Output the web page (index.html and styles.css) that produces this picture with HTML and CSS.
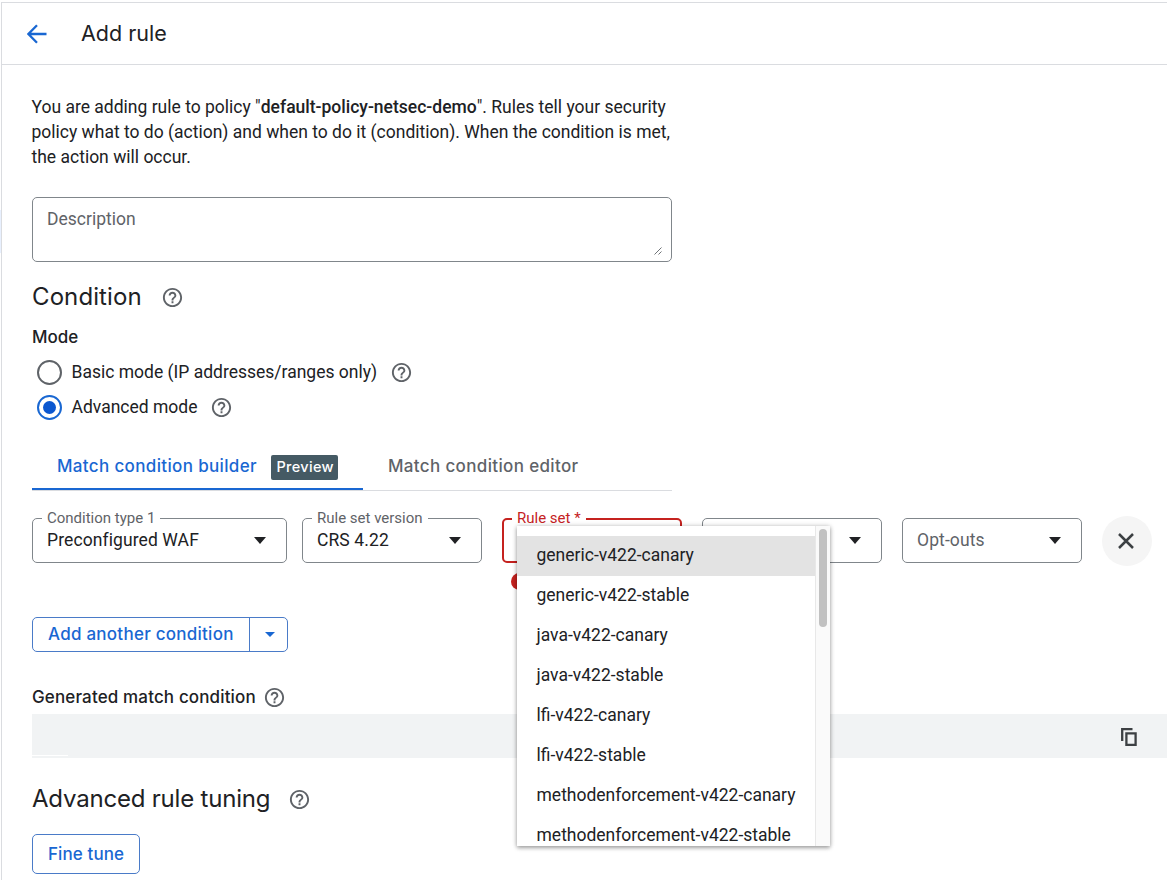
FILE: index.html
```html
<!DOCTYPE html>
<html lang="en">
<head>
    <meta charset="UTF-8">
    <meta name="viewport" content="width=device-width, initial-scale=1.0">
    <title>Add rule</title>
    <link rel="stylesheet" href="styles.css">
</head>
<body>
    <svg width="0" height="0" class="sprite">
        <symbol id="help" viewBox="0 0 24 24">
            <path d="M11 18h2v-2h-2v2zm1-16C6.48 2 2 6.48 2 12s4.48 10 10 10 10-4.48 10-10S17.52 2 12 2zm0 18c-4.41 0-8-3.59-8-8s3.59-8 8-8 8 3.59 8 8-3.59 8-8 8zm0-14c-2.21 0-4 1.79-4 4h2c0-1.1.9-2 2-2s2 .9 2 2c0 2-3 1.75-3 5h2c0-2.25 3-2.5 3-5 0-2.21-1.79-4-4-4z"/>
        </symbol>
    </svg>

    <div class="page">
        <header class="header">
            <svg class="back" viewBox="0 0 20 20"><path d="M19.5 10H1.6M10 1.2L1.4 10l8.6 8.8"/></svg>
            <h1 class="title">Add rule</h1>
        </header>

        <main class="content">
            <p class="intro">You are adding rule to policy "<b>default-policy-netsec-demo</b>". Rules tell your security<br>policy what to do (action) and when to do it (condition). When the condition is met,<br>the action will occur.</p>

            <div class="description">
                <span>Description</span>
                <svg class="grip" viewBox="0 0 8 8"><path d="M0.5 7.5l7-7M4.5 7.5l3-3"/></svg>
            </div>

            <h2 class="heading"><span>Condition</span><svg class="help"><use href="#help"/></svg></h2>

            <div class="mode-label">Mode</div>
            <div class="radio-row">
                <span class="radio"></span>
                <span class="radio-text">Basic mode (IP addresses/ranges only)</span>
                <svg class="help"><use href="#help"/></svg>
            </div>
            <div class="radio-row">
                <span class="radio checked"></span>
                <span class="radio-text">Advanced mode</span>
                <svg class="help"><use href="#help"/></svg>
            </div>

            <div class="tabs">
                <div class="tab active"><span>Match condition builder</span><span class="badge">Preview</span></div>
                <div class="tab"><span>Match condition editor</span></div>
            </div>

            <div class="fields">
                <div class="field wide">
                    <span class="label">Condition type 1</span>
                    <span class="value">Preconfigured WAF</span>
                    <span class="caret"></span>
                </div>
                <div class="field">
                    <span class="label">Rule set version</span>
                    <span class="value">CRS 4.22</span>
                    <span class="caret"></span>
                </div>
                <div class="rule-set">
                    <div class="field error">
                        <span class="label">Rule set *</span>
                    </div>
                    <span class="error-icon"></span>
                    <div class="menu">
                        <ul class="options">
                            <li class="selected">generic-v422-canary</li>
                            <li>generic-v422-stable</li>
                            <li>java-v422-canary</li>
                            <li>java-v422-stable</li>
                            <li>lfi-v422-canary</li>
                            <li>lfi-v422-stable</li>
                            <li>methodenforcement-v422-canary</li>
                            <li>methodenforcement-v422-stable</li>
                        </ul>
                        <div class="scrollbar"><div class="thumb"></div></div>
                    </div>
                </div>
                <div class="field">
                    <span class="value"></span>
                    <span class="caret"></span>
                </div>
                <div class="field">
                    <span class="value placeholder">Opt-outs</span>
                    <span class="caret"></span>
                </div>
                <div class="remove">
                    <svg viewBox="0 0 16 16"><path d="M1 1l14 14M15 1L1 15"/></svg>
                </div>
            </div>

            <div class="split-button">
                <span class="split-main">Add another condition</span>
                <span class="split-arrow"><span class="caret small"></span></span>
            </div>

            <div class="generated"><span>Generated match condition</span><svg class="help"><use href="#help"/></svg></div>
            <div class="code-bar">
                <span class="scroll-hint"></span>
                <svg class="copy" viewBox="0 0 16 19"><path d="M1.2 13V1.2h10.3M5.4 5.4h9.2v11.4H5.4z"/></svg>
            </div>

            <h2 class="heading tuning"><span>Advanced rule tuning</span><svg class="help"><use href="#help"/></svg></h2>
            <div class="fine-tune">Fine tune</div>
        </main>
    </div>
</body>
</html>
```

FILE: styles.css
```css
* {
    box-sizing: border-box;
}

body {
    margin: 0;
    /* selected item of the side nav, just visible at the left edge */
    background: linear-gradient(#e8f0fe, #e8f0fe) 0 210px / 1px 43px no-repeat #ffffff;
    color: #202124;
    font-family: Roboto, Arial, sans-serif;
    font-size: 17.5px;
    height: 880px;
    overflow: hidden;
}

.sprite {
    position: absolute;
}

.page {
    margin: 2px 0 0 1px;
    height: 878px;
    border-top: 1px solid #dadce0;
    border-left: 1px solid #dadce0;
}

.header {
    display: flex;
    align-items: center;
    height: 62px;
    padding-left: 25px;
    border-bottom: 1px solid #dadce0;
}

.back {
    width: 20px;
    height: 20px;
    margin-right: 34px;
    fill: none;
    stroke: #1967d2;
    stroke-width: 2.3;
}

.title,
.heading,
.mode-label,
.tab,
.split-button,
.generated,
.fine-tune {
    font-family: Inter, Arial, sans-serif;
}

.title {
    margin: 0;
    padding-bottom: 2px;
    font-size: 21.5px;
    font-weight: 400;
}

.content {
    padding: 30px 0 0 30px;
}

.intro {
    margin: 0 0 0 -0.5px;
    line-height: 25px;
    white-space: nowrap;
}

.intro b {
    font-weight: 500;
}

.description {
    display: flex;
    justify-content: space-between;
    width: 640px;
    height: 65px;
    margin-top: 27px;
    padding: 11px 9px 6px 14px;
    border: 1px solid #80868b;
    border-radius: 5px;
    color: #5f6368;
}

.grip {
    align-self: flex-end;
    width: 8px;
    height: 8px;
    fill: none;
    stroke: #5f6368;
    stroke-width: 0.9;
}

.heading {
    display: flex;
    align-items: center;
    gap: 19px;
    height: 30px;
    margin: 20px 0 0;
    font-size: 24px;
    font-weight: 400;
    letter-spacing: 0.1px;
}

.heading span {
    padding-bottom: 2px;
}

.help {
    flex: none;
    width: 23px;
    height: 23px;
    fill: #5f6368;
}

.mode-label {
    height: 30px;
    margin-top: 10px;
    font-size: 17px;
    font-weight: 500;
    line-height: 30px;
}

.radio-row {
    display: flex;
    align-items: center;
    height: 35px;
    padding-left: 5px;
}

.mode-label + .radio-row {
    margin-top: 3px;
}

.radio {
    display: flex;
    align-items: center;
    justify-content: center;
    width: 25px;
    height: 25px;
    margin-right: 9.5px;
    border: 2px solid #5f6368;
    border-radius: 50%;
}

.radio-text {
    padding-bottom: 2px;
}

.radio.checked {
    border-color: #1967d2;
}

.radio.checked::after {
    content: "";
    width: 13px;
    height: 13px;
    border-radius: 50%;
    background-color: #0b57d0;
}

.radio-row .help {
    margin-left: 13px;
}

.tabs {
    display: flex;
    width: 640px;
    height: 48px;
    margin-top: 18px;
    border-bottom: 1px solid #dadce0;
}

.tab {
    display: flex;
    align-items: center;
    height: 47px;
    padding: 0 25px 2px;
    color: #5f6368;
    font-size: 17px;
    font-weight: 500;
    letter-spacing: 0.35px;
    white-space: nowrap;
}

.tab.active {
    width: 331px;
    padding-bottom: 0;
    border-bottom: 2px solid #1967d2;
    color: #1967d2;
}

.badge {
    height: 25px;
    margin: 3px 0 0 auto;
    padding: 0 4px 0 5px;
    border-radius: 2px;
    background-color: #455a64;
    color: #ffffff;
    font-size: 14.5px;
    line-height: 24px;
}

.fields {
    display: flex;
    align-items: flex-start;
    gap: 20px;
    height: 99px;
    margin-top: 27px;
}

.field {
    position: relative;
    display: flex;
    align-items: center;
    justify-content: space-between;
    width: 180px;
    height: 45px;
    padding: 0 20px 1px 14px;
    border: 1px solid #80868b;
    border-radius: 5px;
}

.field.wide {
    width: 255px;
    margin-right: -5px;
}

/* floating label that breaks the outline */
.label {
    position: absolute;
    top: -10px;
    left: 9px;
    padding: 0 5px;
    background-color: #ffffff;
    color: #5f6368;
    font-size: 15px;
    line-height: 18px;
}

.value {
    padding-bottom: 1px;
    letter-spacing: 0.1px;
}

.placeholder {
    color: #5f6368;
}

.caret {
    border: 6.5px solid transparent;
    border-top: 7px solid #202124;
    border-bottom: 0;
}

.caret.small {
    border-width: 5px;
    border-bottom: 0;
    border-top-color: #1967d2;
}

.rule-set {
    position: relative;
}

.field.error {
    border: 2px solid #c5221f;
}

.field.error .label {
    top: -11px;
    left: 8px;
    color: #c5221f;
}

.error-icon {
    display: block;
    width: 17px;
    height: 17px;
    margin: 10px 0 0 9px;
    border-radius: 50%;
    background-color: #c5221f;
}

.menu {
    position: absolute;
    z-index: 2;
    top: 8px;
    left: 15px;
    display: flex;
    width: 313px;
    height: 320px;
    overflow: hidden;
    background-color: #ffffff;
    box-shadow: 0 2px 4px rgba(0, 0, 0, 0.3), 0 0 5px rgba(0, 0, 0, 0.2);
}

.options {
    flex: 1;
    margin: 0;
    padding: 10px 0 0;
    list-style: none;
}

.options li {
    height: 40px;
    padding-left: 19.5px;
    line-height: 39px;
    white-space: nowrap;
}

.options .selected {
    background-color: #e3e3e3;
}

.scrollbar {
    width: 15px;
    padding: 3px 0 0 3px;
    border-left: 1px solid #e8e8e8;
    background-color: #fafafa;
}

.thumb {
    width: 8px;
    height: 98px;
    border-radius: 4px;
    background-color: #c1c1c1;
}

.remove {
    display: flex;
    align-items: center;
    justify-content: center;
    width: 50px;
    height: 50px;
    margin-top: -2px;
    border-radius: 50%;
    background-color: #f5f5f5;
}

.remove svg {
    width: 16px;
    height: 16px;
    margin-right: 2px;
    fill: none;
    stroke: #3c4043;
    stroke-width: 2.5;
}

.split-button {
    display: flex;
    width: 256px;
    height: 35px;
    border: 1px solid #4a7bc8;
    border-radius: 5px;
    color: #1967d2;
    font-size: 17px;
    font-weight: 500;
    letter-spacing: 0.25px;
}

.split-main {
    width: 217px;
    padding-left: 15px;
    border-right: 1px solid #4a7bc8;
    line-height: 33px;
    white-space: nowrap;
}

.split-arrow {
    display: flex;
    flex: 1;
    align-items: center;
    justify-content: center;
    padding-left: 2px;
}

.generated {
    display: flex;
    align-items: center;
    gap: 7px;
    height: 30px;
    margin-top: 30px;
    font-size: 17px;
    font-weight: 500;
    letter-spacing: 0.14px;
}

.code-bar {
    display: flex;
    align-items: center;
    justify-content: space-between;
    height: 44px;
    margin-top: 2px;
    padding: 2px 30px 0 0;
    background-color: #f1f3f4;
}

.scroll-hint {
    align-self: flex-end;
    width: 36px;
    height: 1px;
    margin-bottom: 2px;
    background-color: #ffffff;
}

.copy {
    width: 16px;
    height: 19px;
    fill: none;
    stroke: #3c4043;
    stroke-width: 2.3;
}

.heading.tuning {
    gap: 18px;
    margin-top: 26px;
    letter-spacing: -0.2px;
}

.fine-tune {
    width: 108px;
    height: 40px;
    margin-top: 20px;
    padding-left: 15px;
    border: 1px solid #4a7bc8;
    border-radius: 5px;
    color: #1967d2;
    font-size: 17px;
    font-weight: 500;
    letter-spacing: 0.1px;
    line-height: 38px;
}
```
